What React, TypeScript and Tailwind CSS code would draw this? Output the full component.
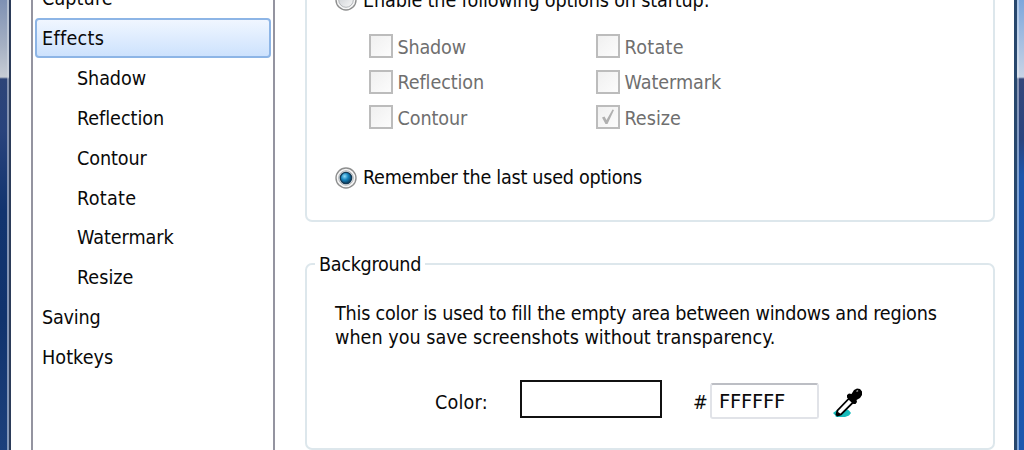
import clsx from "clsx";
import React from "react";

const navItems = [
  { title: "Capture", spacing: "tracking-[0.1px]" },
  { title: "Effects", spacing: "tracking-[0.3px]", active: true },
  { title: "Shadow", spacing: "tracking-[-0.1px]", child: true },
  { title: "Reflection", spacing: "tracking-[-0.05px]", child: true },
  { title: "Contour", spacing: "tracking-[-0.1px]", child: true },
  { title: "Rotate", spacing: "tracking-[0.3px]", child: true },
  { title: "Watermark", spacing: "tracking-[-0.05px]", child: true },
  { title: "Resize", spacing: "tracking-[0px]", child: true },
  { title: "Saving", spacing: "tracking-[-0.2px]" },
  { title: "Hotkeys", spacing: "tracking-[0.05px]" },
];

const effectColumns = [
  [
    { title: "Shadow", spacing: "tracking-[-0.2px]" },
    { title: "Reflection", spacing: "tracking-[-0.1px]" },
    { title: "Contour", spacing: "tracking-[-0.1px]" },
  ],
  [
    { title: "Rotate", spacing: "tracking-[0.3px]" },
    { title: "Watermark", spacing: "tracking-[-0.05px]" },
    { title: "Resize", spacing: "tracking-[0px]", checked: true },
  ],
];

const RadioMark = ({ checked = false }: { checked?: boolean }) => (
  <svg width="22" height="22" viewBox="0 0 22 22" className="shrink-0" aria-hidden="true">
    <defs>
      <linearGradient id="radio-face" x1="0" y1="0" x2="1" y2="1">
        <stop offset="0" stopColor="#c9cdd1" />
        <stop offset="1" stopColor="#f7f7f7" />
      </linearGradient>
      <radialGradient id="radio-dot" cx="0.38" cy="0.35" r="0.7">
        <stop offset="0" stopColor="#8fdcf8" />
        <stop offset="0.45" stopColor="#1583bd" />
        <stop offset="1" stopColor="#0b3553" />
      </radialGradient>
    </defs>
    <circle cx="11" cy="11" r="10" fill="#f6f6f6" stroke="#8e8f8f" strokeWidth="1.4" />
    <circle cx="11" cy="11" r="7.3" fill="url(#radio-face)" stroke="#b4b8bb" strokeWidth="1" />
    {checked && (
      <circle cx="11" cy="11" r="5.7" fill="url(#radio-dot)" stroke="#153a55" strokeWidth="1.2" />
    )}
  </svg>
);

const CheckMark = ({ checked = false }: { checked?: boolean }) => (
  <span className="flex size-6 shrink-0 items-center justify-center border-2 border-[#bcbcbc] bg-linear-to-br from-[#f0f0f0] to-[#fcfcfc]">
    {checked && (
      <svg width="16" height="18" viewBox="0 0 16 18" aria-hidden="true">
        <path d="M2 9.5 L4.5 8.5 L6.5 12 L12.5 1.5 L14 2 L7.5 16 L5.5 16 Z" fill="#b0b0b0" />
      </svg>
    )}
  </span>
);

const Eyedropper = () => (
  <svg width="30" height="30" viewBox="0 0 30 30" aria-label="Pick color">
    <path d="M0 25 L4 22 L9 21 L12 20 L16 22.5 L18 25 L16 27.5 L12 29 L3 29 L2 27 Z" fill="#17bcbc" />
    <path d="M16 10.5 L20 14.5 L8 26.5 L4.5 27.5 L3.5 26.5 L4.5 22.5 Z" fill="#fff" stroke="#000" strokeWidth="1.8" />
    <path d="M5 24 L8 26 L5 28 L3 27 Z" fill="#000" />
    <path d="M14 7 L16 5.5 L18.5 6 L21 2 L24 0.5 L27 1 L29 3.5 L29 7 L27 10 L23.5 12 L24 14 L22.5 16 L20.5 16 L14 9.5 Z" fill="#000" />
    <path d="M23.5 3.5 L25 2.5" stroke="#aaa" strokeWidth="1.5" />
  </svg>
);

const Sidebar = () => (
  <nav className="h-full w-[244px] shrink-0 overflow-hidden border-x-2 border-[#9494a0] px-0.5">
    <ul className="-mt-[22px]">
      {navItems.map((item) => (
        <li
          key={item.title}
          className={clsx(
            "flex h-[39.85px] items-center rounded-[4px] border-2 pt-[3px]",
            item.child ? "pl-10" : "pl-[5px]",
            item.active
              ? "border-[#8db5e6] bg-linear-to-b from-[#f0f6ff] to-[#cde2fd]"
              : "border-transparent",
            item.spacing
          )}
        >
          {item.title}
        </li>
      ))}
    </ul>
  </nav>
);

const StartupOptions = () => (
  <section className="flow-root h-[222px] rounded-b-[7px] border-x-2 border-b-2 border-[#dde7ec] pl-7">
    <div className="-mt-3 flex h-6 items-center gap-1.5">
      <RadioMark />
      <span className="pt-0.5 tracking-[-0.15px]">Enable the following options on startup:</span>
    </div>
    <div className="mt-[22px] flex pl-[34px]">
      {effectColumns.map((column, index) => (
        <ul key={index} className="flex w-[227px] flex-col gap-[11.5px]">
          {column.map((effect) => (
            <li key={effect.title} className="flex h-6 items-center gap-[4.5px] text-[#6f6f6f]">
              <CheckMark checked={effect.checked} />
              <span className={clsx("pt-[3px]", effect.spacing)}>{effect.title}</span>
            </li>
          ))}
        </ul>
      ))}
    </div>
    <div className="mt-[37px] flex h-6 items-center gap-1.5">
      <RadioMark checked />
      <span className="tracking-[-0.27px]">Remember the last used options</span>
    </div>
  </section>
);

const BackgroundOptions = () => (
  <fieldset className="mt-[30px] h-[198px] rounded-[7px] border-2 border-[#dde7ec]">
    <legend className="ml-2 h-6 px-1 pt-px tracking-[-0.3px]">Background</legend>
    <div className="mt-[26px] pl-7">
      <p className="tracking-[-0.22px] whitespace-nowrap">
        This color is used to fill the empty area between windows and regions
      </p>
      <p className="whitespace-nowrap">
        when you save screenshots without transparency.
      </p>
    </div>
    <div className="mt-[30px] flex h-[38px] items-center pl-32">
      <span className="w-[85px] pt-2 tracking-[0.2px]">Color:</span>
      <span className="h-full w-[142px] border-2 border-[#111] bg-white" />
      <span className="ml-[31px] w-[17px] pt-2">#</span>
      <span className="mt-1 flex h-9 w-[109px] items-center rounded-[3px] border-2 border-[#e1e3e8] border-t-[#bcbec4] pt-0.5 pl-[7px] font-['DejaVu_Sans',sans-serif] tracking-[-0.25px] [font-stretch:100%]">
        FFFFFF
      </span>
      <span className="mt-2 ml-3.5">
        <Eyedropper />
      </span>
    </div>
  </fieldset>
);

const App = () => {
  return (
    <main className="flex h-[450px] w-[1024px] overflow-hidden bg-white font-['DejaVu_Sans_Condensed','DejaVu_Sans',sans-serif] text-[19.6px] leading-6 font-[400] text-[#0a0a0a] [font-stretch:75%]">
      <div className="flex w-[11px] shrink-0">
        <div className="w-[7px] bg-[linear-gradient(to_bottom,#7e91b4_0,#a5b0c3_45px,#c6ccd5_77px,#2d4478_79px,#29437c_130px,#12346f_210px,#10336d_320px,#1c407c_450px)]" />
        <div className="w-0.5 bg-[linear-gradient(to_bottom,#b1bdcf_0,#ccd2dc_77px,#8290ae_79px,#8296b8_450px)]" />
        <div className="w-0.5 bg-[#2b3b59]" />
      </div>
      <div className="flex min-w-0 grow pl-5">
        <Sidebar />
        <div className="w-[720px] shrink-0 pl-[30px]">
          <StartupOptions />
          <BackgroundOptions />
        </div>
      </div>
      <div className="flex w-2.5 shrink-0">
        <div className="w-[3px] bg-[#27476d]" />
        <div className="w-0.5 bg-[linear-gradient(to_bottom,#a9c5e8_0,#d8e0ec_77px,#8591b0_79px,#7ea5d9_200px,#7ea5d9_450px)]" />
        <div className="w-[5px] bg-[linear-gradient(to_bottom,#7da7dc_0,#c8d3e5_77px,#34477b_79px,#2a447e_140px,#1d56ab_175px,#1c58ae_450px)]" />
      </div>
    </main>
  );
};

export default App;
